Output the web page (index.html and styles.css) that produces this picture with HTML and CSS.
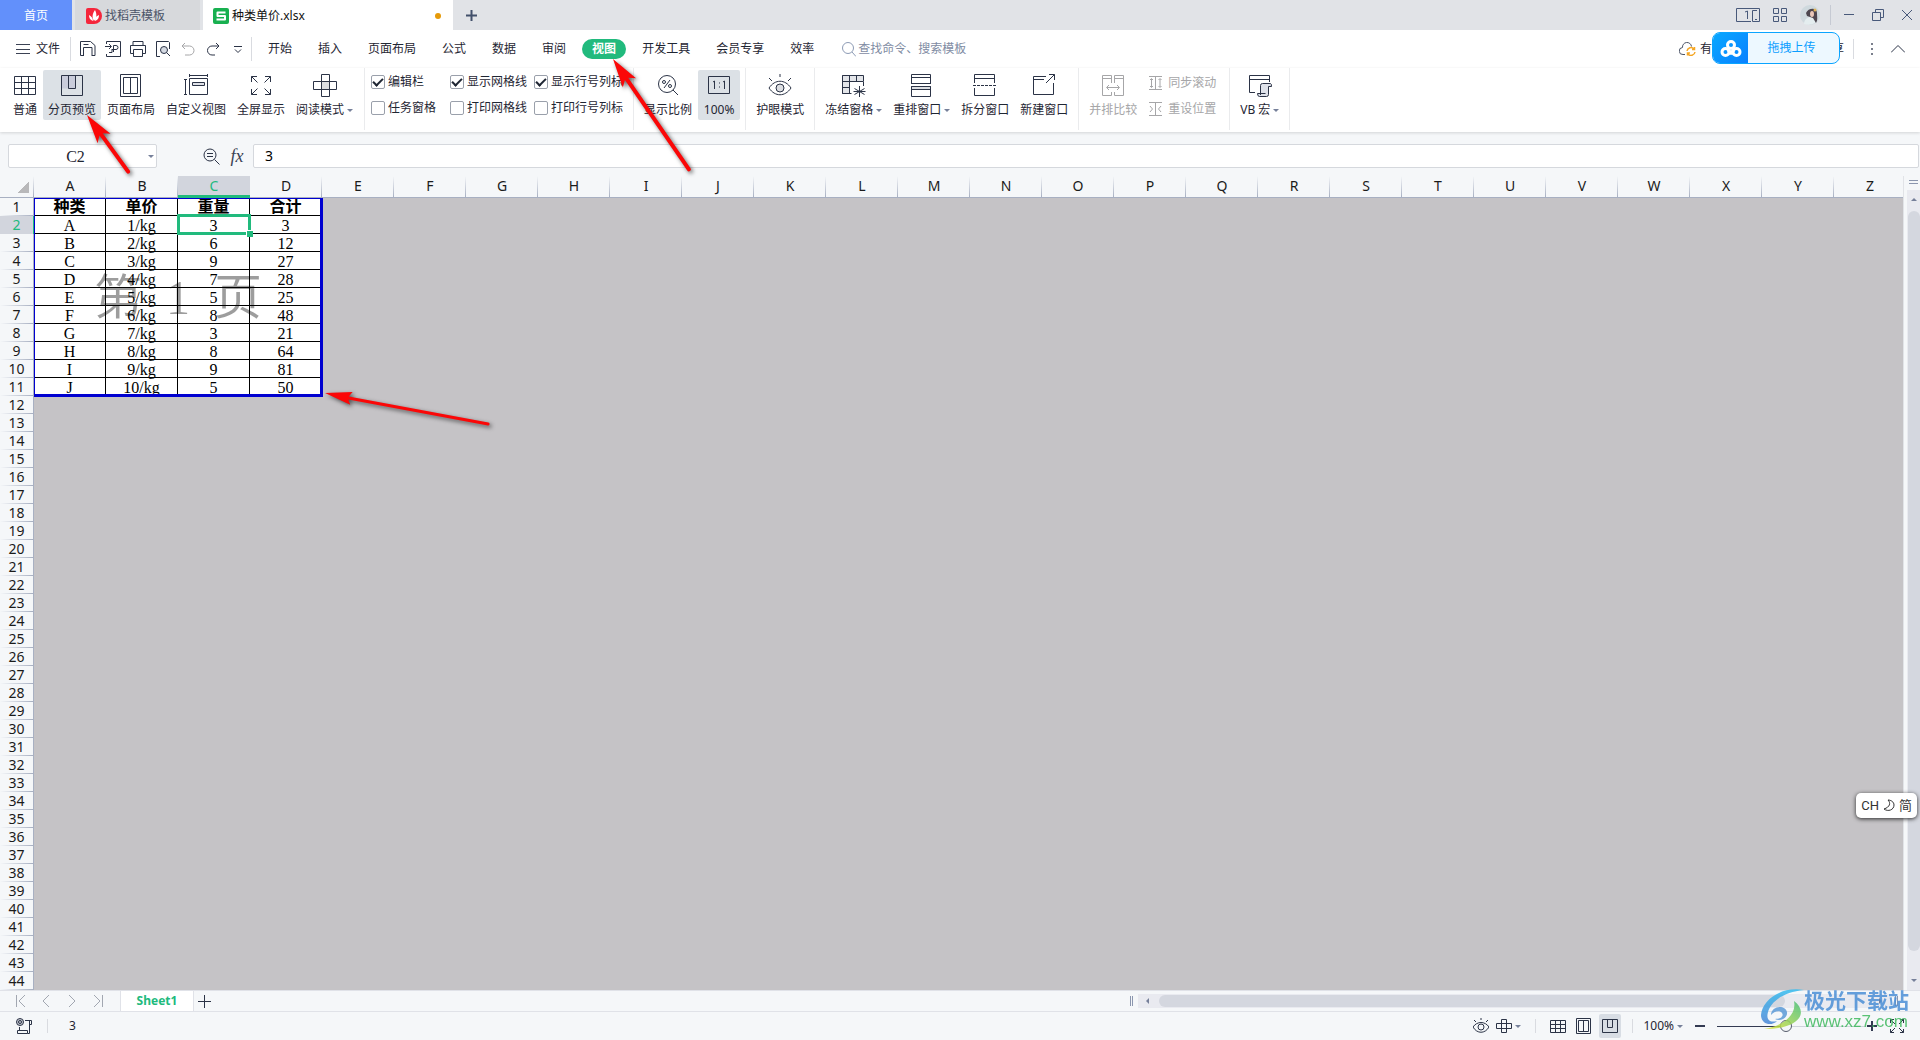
FILE: index.html
```html
<!DOCTYPE html>
<html lang="zh-CN">
<head>
<meta charset="utf-8">
<title>种类单价.xlsx</title>
<link rel="stylesheet" href="styles.css">
</head>
<body>
<div class="app">
  <header class="titlebar">
    <button class="tab tab-home">首页</button>
    <button class="tab tab-docer">
      <svg width="16" height="16" viewBox="0 0 16 16"><path d="M2 0h6a8 8 0 0 1 0 16H2a2 2 0 0 1-2-2V2a2 2 0 0 1 2-2z" fill="#f5263b"/><path d="M8 13C6 10 6 6 9 2c2 4 2 8-1 11zM7 13C4 12 3 10 3 7c2 1 4 3 4 6zM9 13c0-3 1-5 4-6 0 3-1 5-4 6z" fill="#fff"/></svg>
      找稻壳模板</button>
    <button class="tab tab-file">
      <svg width="16" height="16" viewBox="0 0 16 16"><rect width="16" height="16" rx="2" fill="#18b050"/><path d="M12.500 4.500h-8v3.500h7.500v3.500h-8.500" fill="none" stroke="#fff" stroke-width="2" stroke-linejoin="round"/></svg>
      <span class="tab-name">种类单价.xlsx</span><i class="unsaved"></i></button>
    <button class="icon-btn add-tab" aria-label="新建"><svg width="13" height="13" viewBox="0 0 13 13"><path d="M6.500 1v11M1 6.500h11" stroke="#42506b" stroke-width="2"/></svg></button>
    <div class="window-tools">
      <button class="icon-btn" aria-label="窗口"><svg width="24" height="14" viewBox="0 0 24 14" fill="none" stroke="#48597a"><path d="M15 13.500H.5V.5h23v13H16.500v-11H21M19 11.500h2M9 4l2.500-1v8"/></svg></button>
      <button class="icon-btn" aria-label="应用"><svg width="14" height="14" viewBox="0 0 14 14" fill="none" stroke="#48597a"><path d="M.5.5h5v5h-5zM8.500.5h5v5h-5zM.5 8.500h5v5h-5zM8.500 8.500h5v5h-5z"/></svg></button>
      <button class="icon-btn" aria-label="账号"><svg width="20" height="20" viewBox="0 0 20 20"><circle cx="10" cy="10" r="10" fill="#cfd9de"/><path d="M4 19c0-4 3-7 7-7s5 3 4 6q-5 3-11 1z" fill="#e4edef"/><path d="M6 8c2-5 11-6 11 0 0 4 1 7-1 10l-3-5-6-2z" fill="#4d464f"/><ellipse cx="12" cy="9" rx="2" ry="3" fill="#e8c6b8"/><circle cx="15" cy="5" r="1.500" fill="#e0b457"/></svg></button>
      <i class="divider"></i>
      <button class="icon-btn" aria-label="最小化"><svg width="12" height="12" viewBox="0 0 12 12"><path d="M1 5.500h10" stroke="#48597a"/></svg></button>
      <button class="icon-btn" aria-label="还原"><svg width="12" height="12" viewBox="0 0 12 12" fill="none" stroke="#48597a"><path d="M.5 3.500h8v8h-8zM3.500 3.500v-3h8v8h-3"/></svg></button>
      <button class="icon-btn" aria-label="关闭"><svg width="12" height="12" viewBox="0 0 12 12"><path d="M1 1l10 10M11 1L1 11" stroke="#48597a"/></svg></button>
    </div>
  </header>

  <nav class="menubar">
    <button class="file-menu"><svg width="14" height="12" viewBox="0 0 14 12"><path d="M0 1.500h14M0 6.500h14M0 10.500h14" stroke="#3b4254"/></svg>文件</button>
    <i class="divider"></i>
    <div class="quick">
      <button class="icon-btn" aria-label="保存"><svg class="ico" width="16" height="16" viewBox="0 0 16 16"><path d="M3.500 14.500h-3V.5h10l4.500 4v10h-3M3.500 15v-8.500h8.500v8.500M3.500 3.500h5"/></svg></button>
      <button class="icon-btn" aria-label="输出为PDF"><svg class="ico" width="16" height="16" viewBox="0 0 16 16"><path d="M1.500 3V.5h14v15h-14V13M0 5.500h6M4 3l2.500 2.500L4 8M4 11.500h3v-2.500M8.500 11V4.500H11a2 2 0 0 1 0 4H6.500"/></svg></button>
      <button class="icon-btn" aria-label="打印"><svg class="ico" width="16" height="16" viewBox="0 0 16 16"><path d="M3 4.500v-4h10v4M3 12.500H.5v-8h15v8H13M3.500 8.500h9v7h-9z"/></svg></button>
      <button class="icon-btn" aria-label="打印预览"><svg class="ico" width="16" height="16" viewBox="0 0 16 16"><path d="M5 15.500H1.500V.5h12l1 1V8"/><circle cx="9" cy="9" r="3.500" fill="#d5dae3"/><path d="M11.500 11.500L15 15"/></svg></button>
      <button class="icon-btn" aria-label="撤销"><svg class="ico ico-off" width="16" height="16" viewBox="0 0 16 16"><path d="M5 2L2 5l3 3M2 5h7.500a4.500 4.500 0 0 1 0 9H5"/></svg></button>
      <button class="icon-btn" aria-label="恢复"><svg class="ico" width="16" height="16" viewBox="0 0 16 16"><path d="M11 2l3 3-3 3M14 5H7a4.500 4.500 0 0 0 0 9h3"/></svg></button>
      <button class="icon-btn" aria-label="更多"><svg class="ico" width="16" height="16" viewBox="0 0 16 16"><path d="M4 5.500h8M5 8.500l3 3 3-3"/></svg></button>
    </div>
    <i class="divider"></i>
    <div class="menu-tabs">
      <button>开始</button><button>插入</button><button>页面布局</button><button>公式</button><button>数据</button><button>审阅</button><button class="current">视图</button><button>开发工具</button><button>会员专享</button><button>效率</button>
    </div>
    <label class="search"><svg width="14" height="15" viewBox="0 0 14 15" fill="none" stroke="#8d9bb5"><circle cx="6" cy="6" r="5.500"/><path d="M10 10l4 4.500"/></svg><input type="text" placeholder="查找命令、搜索模板"></label>
    <div class="share">
      <button class="cloud"><svg width="17" height="14" viewBox="0 0 17 14" fill="none"><path d="M6 12.500H4a3.500 3.500 0 0 1-.5-7 4.500 4.500 0 0 1 9-1" stroke="#4b5468"/><path d="M8 9a4 4 0 0 1 7-2M15.500 5v2.500H13M16 10a4 4 0 0 1-7 2M8.500 13.500V11H11" stroke="#f5a623" stroke-width="1.500"/></svg>有修改</button>
      <button>分享</button>
      <i class="divider"></i>
      <button class="icon-btn" aria-label="选项"><svg width="3" height="12" viewBox="0 0 3 12" fill="#7a7f8c"><path d="M0 0h2v2H0zM0 5h2v2H0zM0 10h2v2H0z"/></svg></button>
      <button class="icon-btn" aria-label="收起功能区"><svg class="ico" width="14" height="8" viewBox="0 0 14 8"><path d="M0 7.500l7-7 7 7"/></svg></button>
    </div>
    <button class="upload"><span class="upload-logo"><svg width="22" height="17" viewBox="0 0 22 17" fill="none" stroke="#fff" stroke-width="3"><circle cx="11" cy="5" r="3.500"/><circle cx="5.500" cy="12" r="3.500"/><circle cx="16.500" cy="12" r="3.500"/><path d="M8 10l5 4M14 10l-5 4"/></svg></span><span class="upload-text">拖拽上传</span></button>
  </nav>

  <section class="ribbon">
    <button class="tool"><svg class="ico" width="24" height="24" viewBox="0 0 24 24"><path d="M1.500 2.500h21v18h-21zM1.500 8.500h21M1.500 14.500h21M8.500 2.500v18M15.500 2.500v18"/></svg><span>普通</span></button>
    <button class="tool on"><svg class="ico" width="24" height="24" viewBox="0 0 24 24"><path d="M1.500 1.500h14v13h-14z" fill="#c9ccdb" stroke="none"/><path d="M1.500 1.500h21v20h-21zM8.500 1.500v13M15.500 1.500v13h-7"/></svg><span>分页预览</span></button>
    <button class="tool"><svg class="ico" width="24" height="24" viewBox="0 0 24 24"><path d="M1.500.5h20v22h-20zM4.500 3.500h14v16h-14zM11.500 3.500v16"/></svg><span>页面布局</span></button>
    <button class="tool"><svg class="ico" width="26" height="24" viewBox="0 0 26 24"><path d="M6.500 4.500h18v16h-18zM6 1.500h18M6.500 0v3M24.500 0v3M2.500 5v16M1 5.500h3M1 20.500h3"/><path d="M9.500 8.500h12v3h-12z" fill="#dfe1e8"/></svg><span>自定义视图</span></button>
    <button class="tool"><svg class="ico" width="22" height="24" viewBox="0 0 22 24"><path d="M1.500 8V2.500H7M1.500 2.500l6 6M15 2.500h5.500V8M20.500 2.500l-6 6M1.500 15v5.500H7M1.500 20.500l6-6M15 20.500h5.500V15M20.500 20.500l-6-6"/></svg><span>全屏显示</span></button>
    <button class="tool"><svg class="ico reading" width="26" height="24" viewBox="0 0 26 24"><path d="M9.500 7.500h8v8h-8z" fill="#dcdee2"/><path d="M9.500.5h8v22h-8zM1.500 7.500h23v8h-23z"/></svg><span class="drop">阅读模式</span></button>
    <i class="sep"></i>
    <div class="checks">
      <label><input type="checkbox" checked>编辑栏</label><label><input type="checkbox" checked>显示网格线</label><label><input type="checkbox" checked>显示行号列标</label>
      <label><input type="checkbox">任务窗格</label><label><input type="checkbox">打印网格线</label><label><input type="checkbox">打印行号列标</label>
    </div>
    <i class="sep"></i>
    <button class="tool"><svg class="ico" width="24" height="24" viewBox="0 0 24 24"><circle cx="11" cy="10" r="8.500"/><path d="M17 16l5 5M14 6l-6 8"/><circle cx="8" cy="8" r="1.500"/><circle cx="14" cy="12" r="1.500"/></svg><span>显示比例</span></button>
    <button class="tool on scale"><svg class="ico" width="24" height="24" viewBox="0 0 24 24"><path d="M1.500 2.500h21v17h-21zM6 8l1.500-1v8M16 8l1.500-1v8M12.500 8.500v1M12.500 12.500v1"/></svg><span>100%</span></button>
    <i class="sep"></i>
    <button class="tool"><svg class="ico" width="24" height="24" viewBox="0 0 24 24"><path d="M1 14c6-9 16-9 22 0-6 9-16 9-22 0zM12 0v3M1 4l3 3M23 4l-3 3"/><circle cx="12" cy="14" r="4" fill="#dcdee2"/></svg><span>护眼模式</span></button>
    <i class="sep"></i>
    <button class="tool"><svg class="ico" width="26" height="24" viewBox="0 0 26 24"><path d="M1.500 1.500h21v6h-21zM1.500 7.500h7v12h-7z" fill="#e3e5e9"/><path d="M22.500 8v4M1.500 1.500v18h9M8.500 1.500v18M1.500 13.500h7M15.500 1.500v6M18.500 12v11M13.500 14.500l10 6M23.500 14.500l-10 6M12.500 17.500h12"/></svg><span class="drop">冻结窗格</span></button>
    <button class="tool"><svg class="ico" width="24" height="24" viewBox="0 0 24 24"><path d="M1.500 9V.5h19V9M1.500 3.500h19M1 9.500h20"/><path d="M1.500 12.500h19v3h-19z" fill="#dcdee2"/><path d="M1.500 12.500h19v10h-19z"/></svg><span class="drop">重排窗口</span></button>
    <button class="tool"><svg class="ico" width="24" height="24" viewBox="0 0 24 24"><path d="M1.500 9V.5h20V9M1.500 4.500h20M1.500 14v7.500h20V14"/><path d="M0 11.500h24" stroke-dasharray="3 1"/></svg><span>拆分窗口</span></button>
    <button class="tool"><svg class="ico" width="24" height="24" viewBox="0 0 24 24"><path d="M14 2.500H1.500v18h20V9M1.500 5.500H12M14 9l8.500-8.500M17 .5h5.500V6"/></svg><span>新建窗口</span></button>
    <i class="sep"></i>
    <button class="tool off"><svg class="ico ico-off" width="24" height="24" viewBox="0 0 24 24"><path d="M10.500 9V1.500h-9v20h9V18M1.500 4.500h9M13.500 9V1.500h9v20h-9V18M13.500 4.500h9M6 13.500h12M8 11l-2.500 2.500L8 16M16 11l2.500 2.500L16 16"/></svg><span>并排比较</span></button>
    <div class="stack">
      <button><svg class="ico ico-off" width="14" height="16" viewBox="0 0 14 16"><path d="M0 1.500h13M0 14.500h13M6.500 1.500v13M2.500 4v8M11 4v8M1 5l1.500-1.500L4 5M1 11l1.500 1.500L4 11M9.500 5L11 3.500 12.500 5M9.500 11l1.500 1.500 1.500-1.500"/></svg>同步滚动</button>
      <button><svg class="ico ico-off" width="14" height="16" viewBox="0 0 14 16"><path d="M0 1.500h13M0 14.500h13M6.500 1.500v13M1 5l2.500 3L1 11M12 5L9.500 8l2.500 3"/></svg>重设位置</button>
    </div>
    <i class="sep"></i>
    <button class="tool"><svg class="ico" width="24" height="24" viewBox="0 0 24 24"><path d="M7 18.500H1.500v-17h20V8M1.500 5.500h20"/><path d="M12.500 21V11.500q0-2 2-2h8q1 0 1 3h-3v8q0 2-2 2h-7q-2 0-2-3h8" fill="#dfe2ea"/></svg><span class="drop">VB 宏</span></button>
    <i class="sep"></i>
  </section>

  <section class="formula-bar">
    <div class="name-box"><input type="text" value="C2" aria-label="名称框"><i class="caret"></i></div>
    <div class="fx-tools">
      <button class="icon-btn" aria-label="查找"><svg class="ico" width="17" height="17" viewBox="0 0 17 17"><circle cx="7" cy="7" r="6"/><path d="M11.500 11.500l5 5M4 5.500h6M4 8.500h6"/></svg></button>
      <button class="icon-btn fx">fx</button>
    </div>
    <input class="formula" type="text" value="3" aria-label="编辑栏">
  </section>

  <main class="workspace">
    <div class="sheet">
      <table>
        <colgroup><col class="col-head"><col span="26"></colgroup>
        <thead><tr><th class="corner"></th><th>A</th><th>B</th><th class="sel">C</th><th>D</th><th>E</th><th>F</th><th>G</th><th>H</th><th>I</th><th>J</th><th>K</th><th>L</th><th>M</th><th>N</th><th>O</th><th>P</th><th>Q</th><th>R</th><th>S</th><th>T</th><th>U</th><th>V</th><th>W</th><th>X</th><th>Y</th><th>Z</th></tr></thead>
        <tbody class="data">
          <tr class="heads"><th>1</th><td>种类</td><td>单价</td><td>重量</td><td>合计</td><td colspan="22"></td></tr>
          <tr><th class="sel">2</th><td>A</td><td>1/kg</td><td>3</td><td>3</td><td colspan="22"></td></tr>
          <tr><th>3</th><td>B</td><td>2/kg</td><td>6</td><td>12</td><td colspan="22"></td></tr>
          <tr><th>4</th><td>C</td><td>3/kg</td><td>9</td><td>27</td><td colspan="22"></td></tr>
          <tr><th>5</th><td>D</td><td>4/kg</td><td>7</td><td>28</td><td colspan="22"></td></tr>
          <tr><th>6</th><td>E</td><td>5/kg</td><td>5</td><td>25</td><td colspan="22"></td></tr>
          <tr><th>7</th><td>F</td><td>6/kg</td><td>8</td><td>48</td><td colspan="22"></td></tr>
          <tr><th>8</th><td>G</td><td>7/kg</td><td>3</td><td>21</td><td colspan="22"></td></tr>
          <tr><th>9</th><td>H</td><td>8/kg</td><td>8</td><td>64</td><td colspan="22"></td></tr>
          <tr><th>10</th><td>I</td><td>9/kg</td><td>9</td><td>81</td><td colspan="22"></td></tr>
          <tr><th>11</th><td>J</td><td>10/kg</td><td>5</td><td>50</td><td colspan="22"></td></tr>
        </tbody>
        <tbody>
          <tr><th>12</th><td colspan="26"></td></tr>
          <tr><th>13</th><td colspan="26"></td></tr>
          <tr><th>14</th><td colspan="26"></td></tr>
          <tr><th>15</th><td colspan="26"></td></tr>
          <tr><th>16</th><td colspan="26"></td></tr>
          <tr><th>17</th><td colspan="26"></td></tr>
          <tr><th>18</th><td colspan="26"></td></tr>
          <tr><th>19</th><td colspan="26"></td></tr>
          <tr><th>20</th><td colspan="26"></td></tr>
          <tr><th>21</th><td colspan="26"></td></tr>
          <tr><th>22</th><td colspan="26"></td></tr>
          <tr><th>23</th><td colspan="26"></td></tr>
          <tr><th>24</th><td colspan="26"></td></tr>
          <tr><th>25</th><td colspan="26"></td></tr>
          <tr><th>26</th><td colspan="26"></td></tr>
          <tr><th>27</th><td colspan="26"></td></tr>
          <tr><th>28</th><td colspan="26"></td></tr>
          <tr><th>29</th><td colspan="26"></td></tr>
          <tr><th>30</th><td colspan="26"></td></tr>
          <tr><th>31</th><td colspan="26"></td></tr>
          <tr><th>32</th><td colspan="26"></td></tr>
          <tr><th>33</th><td colspan="26"></td></tr>
          <tr><th>34</th><td colspan="26"></td></tr>
          <tr><th>35</th><td colspan="26"></td></tr>
          <tr><th>36</th><td colspan="26"></td></tr>
          <tr><th>37</th><td colspan="26"></td></tr>
          <tr><th>38</th><td colspan="26"></td></tr>
          <tr><th>39</th><td colspan="26"></td></tr>
          <tr><th>40</th><td colspan="26"></td></tr>
          <tr><th>41</th><td colspan="26"></td></tr>
          <tr><th>42</th><td colspan="26"></td></tr>
          <tr><th>43</th><td colspan="26"></td></tr>
          <tr><th>44</th><td colspan="26"></td></tr>
        </tbody>
      </table>
      <div class="page-mark"><span>第</span><span>1</span><span>页</span></div>
      <div class="page-border"></div>
      <div class="selection"></div>
    </div>
    <div class="vscroll"><i class="split"></i><div class="vtrack"><i class="arrow up"></i><i class="vthumb"></i><i class="arrow down"></i></div></div>
  </main>

  <section class="sheet-tabs">
    <div class="sheet-nav">
      <button class="icon-btn" aria-label="第一张"><svg width="12" height="14" viewBox="0 0 12 14"><path d="M1.500 1v12M10 1L4 7l6 6"/></svg></button>
      <button class="icon-btn" aria-label="上一张"><svg width="12" height="14" viewBox="0 0 12 14"><path d="M8 1L2 7l6 6"/></svg></button>
      <button class="icon-btn" aria-label="下一张"><svg width="12" height="14" viewBox="0 0 12 14"><path d="M2 1l6 6-6 6"/></svg></button>
      <button class="icon-btn" aria-label="最后一张"><svg width="12" height="14" viewBox="0 0 12 14"><path d="M1 1l6 6-6 6M9.500 1v12"/></svg></button>
    </div>
    <button class="sheet-tab">Sheet1</button>
    <button class="icon-btn" aria-label="新建工作表"><svg class="ico" width="13" height="13" viewBox="0 0 13 13"><path d="M6.500 0v13M0 6.500h13"/></svg></button>
    <div class="hscroll"><i class="grip"></i><div class="htrack"><i class="arrow left"></i><i class="hthumb"></i><i class="arrow right"></i></div><i class="grip"></i></div>
  </section>

  <footer class="statusbar">
    <svg class="ico" width="16" height="16" viewBox="0 0 16 16"><circle cx="4" cy="4" r="3.500" fill="#c3c7d0"/><circle cx="4" cy="4" r="1.500"/><path d="M1.500 12.500h10v3h-10zM3.500 12V9M9 2.500h6.500v4h-2M13.500 2.500v13h-2"/></svg>
    <i class="divider"></i>
    <span class="sum">3</span>
    <div class="view-tools">
      <svg class="ico" width="16" height="16" viewBox="0 0 16 16"><path d="M0 9c4-6 12-6 16 0-4 7-12 7-16 0zM8 0v2M1 2l2 2M15 2l-2 2"/><circle cx="8" cy="9" r="3"/></svg>
      <span class="drop"><svg class="ico" width="16" height="16" viewBox="0 0 16 16"><path d="M5.500 1.500h5v13h-5zM.5 5.500h15v5H.5z"/></svg></span>
      <i class="divider"></i>
      <div class="views">
        <button class="icon-btn" aria-label="普通视图"><svg class="ico" width="16" height="16" viewBox="0 0 16 16"><path d="M.5 2.500h15v12H.5zM.5 6.500h15M.5 10.500h15M5.500 2.500v12M10.500 2.500v12"/></svg></button>
        <button class="icon-btn" aria-label="页面布局视图"><svg class="ico" width="16" height="16" viewBox="0 0 16 16"><path d="M.5.5h14v15H.5zM2.500 2.500h10v11h-10zM7.500 2.500v11"/></svg></button>
        <button class="icon-btn on" aria-label="分页预览视图"><svg class="ico" width="16" height="16" viewBox="0 0 16 16"><path d="M.5 1.500h15v13H.5zM5.500 1.500v8M10.500 1.500v8h-5"/></svg></button>
      </div>
      <i class="divider"></i>
      <span class="drop">100%</span>
      <div class="zoom">
        <button class="icon-btn" aria-label="缩小"><svg width="10" height="10" viewBox="0 0 10 10"><path d="M0 5h10" stroke="#333b52" stroke-width="2"/></svg></button>
        <input type="range" min="0" max="100" value="46" aria-label="缩放">
        <button class="icon-btn" aria-label="放大"><svg width="10" height="10" viewBox="0 0 10 10"><path d="M0 5h10M5 0v10" stroke="#333b52" stroke-width="2"/></svg></button>
      </div>
      <button class="icon-btn" aria-label="全屏"><svg class="ico" width="14" height="14" viewBox="0 0 14 14"><path d="M.5 4V.5H4M.5.5L5 5M10 .5h3.500V4M13.500.5L9 5M.5 10v3.500H4M.5 13.500L5 9M10 13.500h3.500V10M13.500 13.500L9 9"/></svg></button>
    </div>
  </footer>

  <svg class="arrows" width="720" height="450" viewBox="0 0 720 450" fill="#fb0707">
    <g transform="translate(87 115) rotate(54)"><path d="M0 0L29-8 24-2H70a2 2 0 0 1 0 4H24L29 8z"/></g>
    <g transform="translate(613 59) rotate(55.500)"><path d="M0 0L29-8 24-2H134a2 2 0 0 1 0 4H24L29 8z"/></g>
    <g transform="translate(325 393) rotate(10.600)"><path d="M0 0L27-6 24-1H166a1 1 0 0 1 0 3H24L27 7z"/></g>
  </svg>

  <div class="ime">CH<svg width="12" height="13" viewBox="0 0 12 13" fill="none" stroke="#333"><path d="M5 1c3 3 2 7-4 9 4 3 10 1 10-4 0-3-3-5-6-5z"/></svg>简</div>

  <div class="watermark">
    <svg width="44" height="42" viewBox="0 0 44 42">
      <defs><linearGradient id="swirl" x1="0" y1="0" x2="0" y2="1"><stop offset="0" stop-color="#35bdf0"/><stop offset="1" stop-color="#4b86d6"/></linearGradient>
      <linearGradient id="leaf" x1="1" y1="0" x2="0" y2="1"><stop offset="0" stop-color="#46c07a"/><stop offset="1" stop-color="#e3e33a"/></linearGradient></defs>
      <path d="M44 1C20-3 2 12 1 26c0 9 10 12 16 6-8 2-11-2-9-9C11 12 24 3 44 1z" fill="url(#swirl)"/>
      <path d="M34 12c14 10 8 28-30 28 18-3 33-13 30-28z" fill="url(#leaf)"/>
      <path d="M11 26c0-9 14-11 16-3 1 6-7 10-12 7 6 0 9-3 7-6-2-3-8-2-11 2z" fill="#5c9bd8"/>
    </svg>
    <div><strong>极光下载站</strong><span>www.xz7.com</span></div>
  </div>
</div>
</body>
</html>
```

FILE: styles.css
```css
* { box-sizing: border-box; }
body {
  margin: 0;
  font: 12px/20px "Noto Sans", "Noto Sans CJK SC", sans-serif;
  color: #1f2633;
  background: #f5f7f9;
}
button, input { font: inherit; color: inherit; margin: 0; padding: 0; border: 0; background: none; }
button { white-space: nowrap; }
svg { display: block; flex: none; }
.app { position: relative; display: flex; flex-direction: column; height: 100vh; overflow: hidden; }
.ico { fill: none; stroke: #2b3346; stroke-width: 1; }
.ico-off { stroke: #a6a6a8; }
.icon-btn { display: grid; place-items: center; flex: none; }
.divider { flex: none; width: 1px; height: 20px; background: #d9dbe0; }

/* title bar */
.titlebar { display: flex; height: 30px; flex: none; background: #e1e3e7; }
.tab { display: flex; align-items: center; gap: 3px; height: 30px; padding: 1px 11px 0; }
.tab-home { width: 72px; justify-content: center; color: #fff; background: #6290fb; }
.tab-docer { width: 125px; margin: 0 3px; background: #d7d9dc; color: #4b5468; }
.tab-file { width: 250px; padding: 1px 12px 0 10px; background: #fff; color: #111; }
.tab-name { flex: 1; text-align: left; }
.unsaved { width: 6px; height: 6px; border-radius: 50%; background: #e69a09; }
.add-tab { width: 36px; }
.window-tools { display: flex; align-items: center; gap: 13px; margin-left: auto; padding-right: 7px; }
.window-tools .divider { margin-left: -3px; margin-right: -1px; background: #c6cad3; }
.window-tools .divider ~ .icon-btn + .icon-btn { margin-left: 4px; }

/* menu bar */
.menubar { position: relative; display: flex; align-items: center; height: 38px; flex: none; padding-left: 16px; background: #fff; }
.menubar .divider { height: 24px; }
.file-menu { display: flex; align-items: center; gap: 6px; margin-right: 10px; }
.quick { display: flex; gap: 9px; margin: 0 5px 0 9px; }
.menu-tabs { display: flex; gap: 26px; margin-left: 16px; }
.menu-tabs .current { margin: 0 -10px; padding: 0 10px; border-radius: 10px; background: #21ba7d; color: #fff; font-weight: bold; }
.search { display: flex; align-items: center; gap: 2px; margin-left: 28px; }
.search input { width: 160px; outline: 0; }
.search input::placeholder { color: #7f8ca3; opacity: 1; }
.share { display: flex; align-items: center; margin-left: auto; padding-right: 15px; }
.cloud { display: flex; align-items: center; gap: 4px; margin-right: 84px; }
.share .divider { margin: 0 17px 0 9px; height: 20px; }
.share .icon-btn + .icon-btn { margin-left: 17px; }
.upload { position: absolute; right: 80px; top: 2px; display: flex; width: 128px; height: 32px; border: 1px solid #0aa4ff; border-radius: 8px; overflow: hidden; background: #edf8ff; color: #0a9eff; }
.upload-logo { display: grid; place-items: center; width: 35px; height: 100%; background: linear-gradient(135deg, #08a8ff, #0a80ff); }
.upload-text { flex: 1; align-self: center; padding-right: 4px; }

/* ribbon */
.ribbon { position: relative; display: flex; align-items: flex-start; gap: 1px; height: 64px; flex: none; padding: 2px 8px 0; background: #fff; box-shadow: 0 1px 3px rgba(0, 0, 0, .14); }
.tool { display: flex; flex-direction: column; align-items: center; height: 50px; padding: 4px 5px 0; border-radius: 2px; }
.tool span { line-height: 20px; margin-top: 2px; }
.tool.on { background: #dce1e6; }
.tool.scale { width: 42px; }
.off, .stack { color: #a6a6a8; }
.drop { display: flex; align-items: center; gap: 3px; }
.drop::after { content: ""; border: 3px solid transparent; border-top: 3px solid #76809a; border-bottom: 0; }
.sep { width: 1px; height: 62px; margin: -2px 4px 0; background: #eaebed; }
.reading + .drop { padding-right: 1px; }
.checks { display: grid; grid-template-columns: 79px 84px auto; grid-auto-rows: 26px; margin-top: -1px; padding: 0 5px 0 1px; }
.checks label { display: flex; align-items: center; gap: 3px; white-space: nowrap; }
.checks input { display: grid; place-items: center; appearance: none; width: 14px; height: 14px; border: 1px solid #9aa0ab; border-radius: 2px; background: #fff; }
.checks input:checked::after { content: ""; width: 8px; height: 4px; margin-top: -2px; border: solid #1f2633; border-width: 0 0 2px 2px; transform: rotate(-45deg); }
.stack { display: grid; grid-auto-rows: 26px; padding: 0 8px 0 6px; }
.stack button { display: flex; align-items: center; gap: 5px; }

/* formula bar */
.formula-bar { display: flex; align-items: center; height: 44px; flex: none; padding: 4px 1px 0 8px; }
.name-box { display: flex; align-items: center; width: 149px; height: 24px; padding-right: 2px; border: 1px solid #d5d8dd; border-radius: 2px; background: #fff; }
.name-box input { flex: 1; min-width: 0; height: 22px; padding: 2px 6px 0 0; text-align: center; font: 16px/20px "Liberation Serif", serif; }
.caret { border: 3px solid transparent; border-top: 3px solid #76809a; border-bottom: 0; }
.fx-tools { display: flex; align-items: center; gap: 9px; margin: 0 8px 0 46px; }
.fx { width: 16px; font: italic 18px/20px "Liberation Serif", serif; color: #3b4254; }
.formula { flex: 1; min-width: 0; height: 24px; padding: 0 11px 2px; border: 1px solid #d5d8dd; border-radius: 2px; background: #fff; font-size: 14px; color: #000; }

/* sheet */
.workspace { display: flex; flex: 1; min-height: 0; }
.sheet { position: relative; flex: 1; min-width: 0; overflow: hidden; background: #c5c3c6; }
table { table-layout: fixed; width: 1906px; border-spacing: 0; }
col { width: 72px; }
.col-head { width: 34px; }
th, td { height: 18px; padding: 0; text-align: center; white-space: nowrap; }
th { padding-bottom: 2px; font-size: 14px; line-height: 15px; font-weight: normal; color: #1b1b1b; background: linear-gradient(90deg, #f5f7f9, #a8b0c2) bottom / 100% 1px no-repeat, #f5f7f9; border-right: 1px solid #a8b0c2; }
thead th { height: 22px; line-height: 19px; border-right: 0; border-bottom: 1px solid #a8b0c2; background: linear-gradient(#f5f7f9, #a8b0c2) right / 1px 100% no-repeat, #f5f7f9; }
.corner { background: linear-gradient(135deg, transparent 50%, #b8b8ba 50%) 18px 6px / 11px 11px no-repeat, linear-gradient(#f5f7f9, #a8b0c2) right / 1px 100% no-repeat, #f5f7f9; }
th.sel { background: #d2d5dd; color: #21ba7d; border-right-color: #21ba7d; }
thead th.sel { padding-bottom: 0; border-bottom: 3px solid #21ba7d; }
.data td { border: solid #000; border-width: 0 1px 1px 0; padding-top: 2px; background: #fff; color: #000; font: 16px/15px "Liberation Serif", "Noto Sans CJK SC", serif; }
.data td:last-child { border: 0; background: #c5c3c6; }
.data .heads td { font-weight: bold; padding-top: 1px; line-height: 16px; }
.page-mark { position: absolute; left: 34px; top: 92px; width: 288px; display: flex; justify-content: center; gap: 24px; font: 48px/60px "Liberation Serif", "Noto Sans CJK SC", serif; color: #000; opacity: .38; pointer-events: none; }
.page-border { position: absolute; left: 34px; top: 22px; width: 289px; height: 199px; border: solid #0000d0; border-width: 1px 3px 3px 1px; }
.selection { position: absolute; left: 177px; top: 38px; width: 74px; height: 21px; border: 3px solid #21ba7d; }
.selection::after { content: ""; position: absolute; right: -5px; bottom: -5px; width: 6px; height: 6px; border: solid #fff; border-width: 1px 0 0 1px; background: #21ba7d; }

.vscroll { display: flex; flex-direction: column; width: 17px; padding-left: 3px; border-left: 1px solid #e1e3e7; }
.split { height: 4px; margin: 4px 2px 6px; border: solid #8b96ae; border-width: 1px 0; }
.vtrack { display: flex; flex-direction: column; align-items: center; flex: 1; padding: 8px 0; background: #e9eaf0; }
.vthumb { flex: 1; width: 12px; margin: 10px 0 28px; border-radius: 6px; background: #d4d7df; }
.arrow { border: 3px solid transparent; }
.up { border-top: 0; border-bottom-color: #76809a; }
.down { border-bottom: 0; border-top-color: #76809a; }
.left { border-left: 0; border-right-color: #76809a; }
.right { border-right: 0; border-left-color: #76809a; }

/* sheet tabs */
.sheet-tabs { display: flex; align-items: center; height: 22px; flex: none; border: solid #e0e2e8; border-width: 1px 0; }
.sheet-nav { display: flex; gap: 14px; padding: 0 15px 0 15px; }
.sheet-nav path { fill: none; stroke: #a2a7b1; }
.sheet-tab { width: 74px; height: 21px; margin-right: 4px; border: 1px solid #e0e2e8; border-top: 0; background: #fff; color: #21ba7d; font-weight: bold; }
.hscroll { display: flex; align-items: center; flex: 0 1 768px; gap: 5px; margin-left: auto; margin-right: 22px; }
.grip { width: 3px; height: 10px; border: solid #8b96ae; border-width: 0 1px; }
.htrack { display: flex; align-items: center; flex: 1; height: 14px; padding: 0 8px; background: #e9eaf0; }
.hthumb { flex: 1; height: 12px; margin: 0 94px 0 10px; border-radius: 6px; background: #d4d7df; }

/* status bar */
.statusbar { display: flex; align-items: center; height: 28px; flex: none; padding: 0 16px; }
.statusbar .divider { height: 14px; margin-left: 15px; }
.sum { margin-left: 21px; }
.view-tools { display: flex; align-items: center; margin-left: auto; }
.view-tools > .drop { margin-left: 7px; }
.view-tools .divider { margin-left: 14px; }
.views { display: flex; gap: 4px; margin: 0 -3px 0 11px; }
.views .icon-btn { width: 22px; height: 24px; border-radius: 2px; }
.views .on { background: #d8dde4; }
.view-tools .views ~ .drop { margin-left: 10px; }
.zoom { display: flex; align-items: center; margin: 0 13px 0 12px; gap: 12px; }
.zoom input { appearance: none; width: 148px; height: 12px; margin-right: -10px; background: linear-gradient(90deg, #333b52 46%, #cfd3dc 46%) center / 100% 1px no-repeat; }
.zoom input::-webkit-slider-thumb { appearance: none; width: 12px; height: 12px; border: 1px solid #555c6b; border-radius: 50%; background: #f5f7f9; }

/* floating layers */
.arrows { position: absolute; left: 0; top: 0; pointer-events: none; filter: drop-shadow(2px 2px 2px rgba(0, 0, 0, .6)); }
.ime { position: absolute; right: 3px; bottom: 222px; display: flex; align-items: center; gap: 4px; height: 25px; padding: 0 5px; border-radius: 5px; background: #fff; box-shadow: 0 1px 4px rgba(0, 0, 0, .8); font-family: Roboto, "Noto Sans CJK SC", sans-serif; font-size: 13px; color: #333; }
.watermark { position: absolute; right: 11px; bottom: 8px; display: flex; opacity: .85; pointer-events: none; }
.watermark div { display: flex; flex-direction: column; }
.watermark strong { font-size: 21px; line-height: 23px; color: #4b8fd6; }
.watermark span { font: 17px/20px "Liberation Sans", sans-serif; color: #3fb95f; }
```
